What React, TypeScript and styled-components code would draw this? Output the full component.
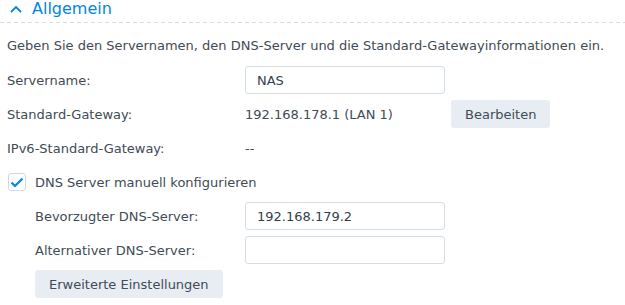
import React, { useState } from "react";
import styled, { createGlobalStyle } from "styled-components";

const GlobalStyle = createGlobalStyle`
  html, body {
    margin: 0;
    padding: 0;
    background: #fff;
  }
  body {
    font-family: "DejaVu Sans", Verdana, sans-serif;
    font-size: 13px;
    color: #414b55;
  }
`;

const Section = styled.section`
  width: 625px;
`;

const SectionHeader = styled.div`
  display: flex;
  align-items: center;
  gap: 10px;
  height: 23px;
  padding-left: 10px;
  box-sizing: border-box;
  color: #0086e5;
  font-family: "DejaVu Sans", Verdana, sans-serif;
  font-size: 16px;
  background-image: linear-gradient(to right, #d6dbe0 0 4px, transparent 4px 7px);
  background-size: 7px 1px;
  background-repeat: repeat-x;
  background-position: 0 22px;
  padding-bottom: 6px;
`;

const Body = styled.div`
  padding: 12px 7px 0 7px;
  display: flex;
  flex-direction: column;
  gap: 6px;
`;

const Description = styled.p`
  margin: 0 0 4px 0;
  line-height: 21px;
`;

const Row = styled.div<{ $indent?: boolean }>`
  display: grid;
  grid-template-columns: ${(p) => (p.$indent ? "204px" : "232px")} 200px auto;
  column-gap: 6px;
  align-items: center;
  height: 28px;
  padding-left: ${(p) => (p.$indent ? "28px" : "0")};
`;

const Label = styled.span`
  white-space: nowrap;
`;

const Value = styled.span`
  white-space: nowrap;
`;

const TextInput = styled.input`
  box-sizing: border-box;
  width: 200px;
  height: 28px;
  border: 1px solid #d5dde6;
  border-radius: 3px;
  padding: 0 11px;
  font-family: inherit;
  font-size: 13px;
  color: #333f4c;
  outline: none;
  background: #fff;
`;

const Button = styled.button`
  justify-self: start;
  height: 28px;
  padding: 0 14px;
  border: none;
  border-radius: 3px;
  background: #e8edf4;
  color: #414b55;
  font-family: inherit;
  font-size: 13px;
  cursor: pointer;
`;

const CheckRow = styled.label`
  display: flex;
  align-items: center;
  gap: 9px;
  height: 28px;
  padding-left: 1px;
  cursor: pointer;
`;

const Box = styled.span<{ $checked: boolean }>`
  box-sizing: border-box;
  width: 18px;
  height: 18px;
  border: 1px solid #d0d7e0;
  border-radius: 3px;
  display: flex;
  align-items: center;
  justify-content: center;
  background: #fff;
  svg {
    visibility: ${(p) => (p.$checked ? "visible" : "hidden")};
  }
`;

const ButtonRow = styled.div`
  height: 28px;
  padding-left: 28px;
  display: flex;
  align-items: center;
`;

export default function App() {
  const [manualDns, setManualDns] = useState(true);

  return (
    <>
      <GlobalStyle />
      <Section>
        <SectionHeader>
          <svg width="12" height="8" viewBox="0 0 12 8">
            <path d="M1 7 L6 2 L11 7" fill="none" stroke="#0086e5" strokeWidth="1.8" />
          </svg>
          <span>Allgemein</span>
        </SectionHeader>
        <Body>
          <Description>
            Geben Sie den Servernamen, den DNS-Server und die Standard-Gatewayinformationen ein.
          </Description>
          <Row>
            <Label>Servername:</Label>
            <TextInput defaultValue="NAS" />
          </Row>
          <Row>
            <Label>Standard-Gateway:</Label>
            <Value>192.168.178.1 (LAN 1)</Value>
            <Button>Bearbeiten</Button>
          </Row>
          <Row>
            <Label>IPv6-Standard-Gateway:</Label>
            <Value>--</Value>
          </Row>
          <CheckRow onClick={() => setManualDns(!manualDns)}>
            <Box $checked={manualDns}>
              <svg width="14" height="11" viewBox="0 0 14 11">
                <path d="M1.5 5.5 L5 9 L12.5 1.5" fill="none" stroke="#0086e5" strokeWidth="2.2" />
              </svg>
            </Box>
            <span>DNS Server manuell konfigurieren</span>
          </CheckRow>
          <Row $indent>
            <Label>Bevorzugter DNS-Server:</Label>
            <TextInput defaultValue="192.168.179.2" />
          </Row>
          <Row $indent>
            <Label>Alternativer DNS-Server:</Label>
            <TextInput defaultValue="" />
          </Row>
          <ButtonRow>
            <Button>Erweiterte Einstellungen</Button>
          </ButtonRow>
        </Body>
      </Section>
    </>
  );
}
